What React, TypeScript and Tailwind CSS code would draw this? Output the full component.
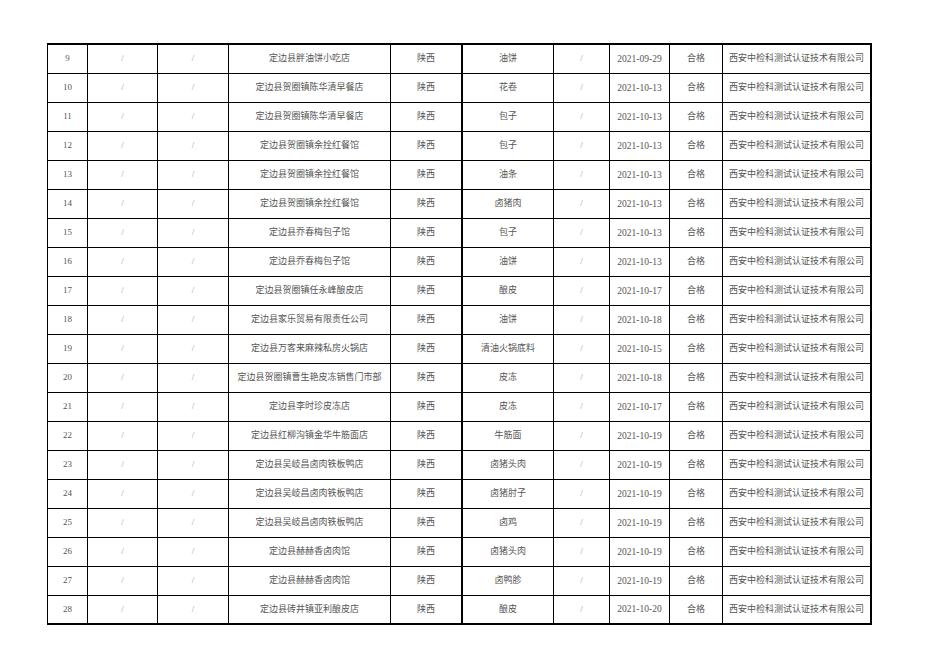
import React from 'react';

const rows: [number, string, string, string][] = [
  [9, '定边县胖油饼小吃店', '油饼', '2021-09-29'],
  [10, '定边县贺圈镇陈华清早餐店', '花卷', '2021-10-13'],
  [11, '定边县贺圈镇陈华清早餐店', '包子', '2021-10-13'],
  [12, '定边县贺圈镇余拴红餐馆', '包子', '2021-10-13'],
  [13, '定边县贺圈镇余拴红餐馆', '油条', '2021-10-13'],
  [14, '定边县贺圈镇余拴红餐馆', '卤猪肉', '2021-10-13'],
  [15, '定边县乔春梅包子馆', '包子', '2021-10-13'],
  [16, '定边县乔春梅包子馆', '油饼', '2021-10-13'],
  [17, '定边县贺圈镇任永峰酿皮店', '酿皮', '2021-10-17'],
  [18, '定边县家乐贸易有限责任公司', '油饼', '2021-10-18'],
  [19, '定边县万客来麻辣私房火锅店', '清油火锅底料', '2021-10-15'],
  [20, '定边县贺圈镇曹生艳皮冻销售门市部', '皮冻', '2021-10-18'],
  [21, '定边县李时珍皮冻店', '皮冻', '2021-10-17'],
  [22, '定边县红柳沟镇金华牛筋面店', '牛筋面', '2021-10-19'],
  [23, '定边县吴岐昌卤肉铁板鸭店', '卤猪头肉', '2021-10-19'],
  [24, '定边县吴岐昌卤肉铁板鸭店', '卤猪肘子', '2021-10-19'],
  [25, '定边县吴岐昌卤肉铁板鸭店', '卤鸡', '2021-10-19'],
  [26, '定边县赫赫香卤肉馆', '卤猪头肉', '2021-10-19'],
  [27, '定边县赫赫香卤肉馆', '卤鸭胗', '2021-10-19'],
  [28, '定边县砖井镇亚利酿皮店', '酿皮', '2021-10-20'],
];

function Cell({ children, thick, last }: { children: React.ReactNode; thick?: boolean; last?: boolean }) {
  return (
    <div
      className={
        'flex items-center justify-center h-[29px] border-black whitespace-nowrap ' +
        (thick ? 'border-r-2 ' : 'border-r ') +
        (last ? 'border-b-2' : 'border-b')
      }
    >
      {children}
    </div>
  );
}

export default function App() {
  return (
    <div className="w-[936px] h-[662px] bg-white pt-[43px] pl-[47px] font-['Liberation_Serif','Noto_Sans_CJK_SC',serif] text-[9px] text-[#555]">
      <div className="grid grid-cols-[40px_70px_71px_162px_72px_91px_56px_60px_53px_149px] w-[825px] border-l border-t-2 border-black">
        {rows.map(([no, shop, food, date], i) => {
          const last = i === rows.length - 1;
          return (
            <React.Fragment key={no}>
              <Cell last={last}>{no}</Cell>
              <Cell last={last}><span className="text-[#999]">/</span></Cell>
              <Cell last={last}><span className="text-[#999]">/</span></Cell>
              <Cell last={last}>{shop}</Cell>
              <Cell last={last} thick>陕西</Cell>
              <Cell last={last}>{food}</Cell>
              <Cell last={last}><span className="text-[#999]">/</span></Cell>
              <Cell last={last}><span className="text-[9.5px]">{date}</span></Cell>
              <Cell last={last}>合格</Cell>
              <Cell last={last} thick>西安中检科测试认证技术有限公司</Cell>
            </React.Fragment>
          );
        })}
      </div>
    </div>
  );
}
